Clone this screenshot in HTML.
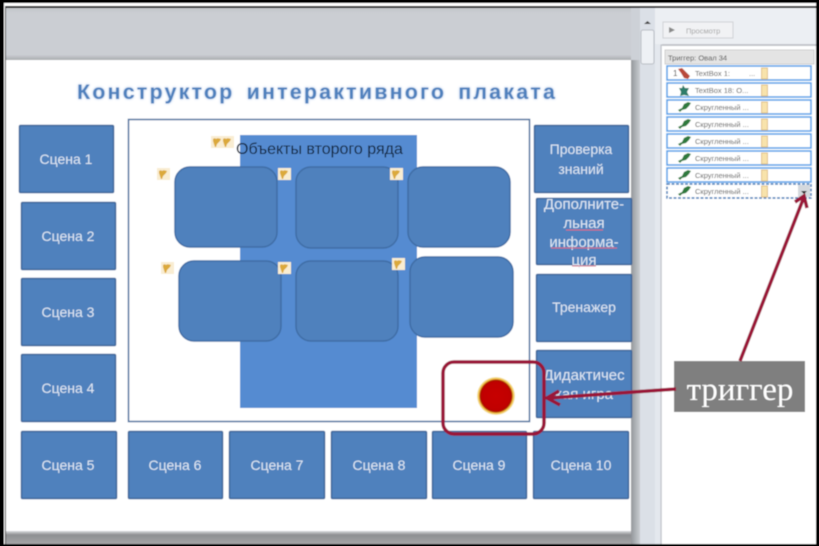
<!DOCTYPE html>
<html><head><meta charset="utf-8"><style>
html,body{margin:0;padding:0;background:#000}
svg{display:block}
text{font-family:"Liberation Sans","DejaVu Sans",sans-serif}
.s{fill:#4f81bd;stroke:#3a659a;stroke-width:1.5}
.t{fill:#dfe8f4;font-size:14px;text-anchor:middle}
.w{font-size:15px}
.r{fill:#4f81bd;stroke:#3f6da5;stroke-width:1.5}
.row{fill:#fff;stroke:#5aa2ea;stroke-width:1.6}
.p{fill:#555;font-size:7.5px}
.ic{fill:#2e7a3c}
.y{fill:#f8e3ac;stroke:#d8b070;stroke-width:.7}
.b{fill:#f9edd2}
.h{fill:#dba93a}
</style></head><body>
<svg width="819" height="546" viewBox="0 0 819 546" xmlns="http://www.w3.org/2000/svg">
<defs>
<linearGradient id="top" x1="0" y1="0" x2="0" y2="1"><stop offset="0" stop-color="#c2c5c9"/><stop offset=".1" stop-color="#cbced3"/><stop offset=".9" stop-color="#cbced3"/><stop offset="1" stop-color="#a9abae"/></linearGradient>
<linearGradient id="bot" x1="0" y1="0" x2="0" y2="1"><stop offset="0" stop-color="#d8d9db"/><stop offset=".3" stop-color="#8e8f91"/><stop offset="1" stop-color="#a5a6a8"/></linearGradient>
<linearGradient id="sh" x1="0" y1="0" x2="1" y2="0"><stop offset="0" stop-color="#94979b"/><stop offset=".35" stop-color="#c6c9ce"/><stop offset="1" stop-color="#cdd1d7"/></linearGradient>
<filter id="all" x="0" y="0" width="100%" height="100%"><feGaussianBlur stdDeviation=".45"/></filter>
<filter id="glow" x="-5%" y="-30%" width="110%" height="160%"><feGaussianBlur stdDeviation="1.4"/></filter>
<radialGradient id="red"><stop offset="0" stop-color="#c70000"/><stop offset=".74" stop-color="#c00000"/><stop offset=".83" stop-color="#a81204"/><stop offset=".9" stop-color="#eec23a"/><stop offset="1" stop-color="#f6e6b8"/></radialGradient>
<g id="heart"><rect x="-7" y="-6" width="13" height="12" class="b"/><path d="M-5-3 q2-1.500 3 0 q1-1.500 5 0 l-1 2 -3 3 -1 3 -1 0 -1-3 -1-3z" class="h"/></g>
<g id="star"><path d="M0 7 l4-2 2-4 4-2 3 1 -2 3 -3 3 -4 1 -2 2z" class="ic"/></g>
</defs>
<g filter="url(#all)">
<rect width="819" height="546" fill="#000"/>
<rect x="4" y="3" width="812" height="541" fill="#fff"/>
<rect x="5" y="6" width="811" height="538" fill="#111"/>
<rect x="6" y="8" width="810" height="536" fill="#cbced3"/>
<rect x="6" y="8" width="649" height="52" fill="url(#top)"/>
<rect x="6" y="531" width="649" height="13" fill="url(#bot)"/>
<rect x="631" y="60" width="24" height="484" fill="url(#sh)"/>
<rect x="631" y="8" width="24" height="52" fill="#cdd1d7"/>
<rect x="6" y="60" width="625" height="471" fill="#fff"/>
<rect x="640" y="8" width="15" height="536" fill="#dbe0e7"/>
<rect x="641" y="30" width="13" height="34" rx="2" fill="#eef1f5" stroke="#b8bcc3"/>
<path d="M644 24h7l-3.500-3z" fill="#444"/>
<rect x="655" y="8" width="7" height="536" fill="#e4e8ee"/>
<rect x="655" y="8" width="161" height="36" fill="#eceff3"/>
<rect x="662" y="46" width="154" height="498" fill="#fff"/>
<path d="M661 544V45H816" fill="none" stroke="#bcbfc4"/>
<rect x="663" y="22" width="70" height="16" fill="#f1f2f4" stroke="#cfd2d6"/>
<path d="M669 27v6l6-3z" fill="#8a8a8a"/>
<text x="686" y="33.500" fill="#a4a4a4" style="font-size:7.500px">Просмотр</text>
<rect x="665" y="50" width="149" height="14" fill="#e4e4e4" stroke="#cfcfcf"/>
<text x="668" y="60.500" fill="#444" style="font-size:7.500px">Триггер: Овал 34</text>
<rect class="row" x="667" y="66" width="144" height="14"/>
<rect class="row" x="667" y="83" width="144" height="14"/>
<rect class="row" x="667" y="100" width="144" height="14"/>
<rect class="row" x="667" y="117" width="144" height="14"/>
<rect class="row" x="667" y="134" width="144" height="14"/>
<rect class="row" x="667" y="151" width="144" height="14"/>
<rect class="row" x="667" y="168" width="144" height="14"/>
<rect x="667" y="184" width="144" height="14" fill="#fff" stroke="#3b78b8" stroke-width="1.500" stroke-dasharray="3 1.500"/>
<text x="673" y="76" fill="#333" style="font-size:8px">1</text>
<path d="M678 69l4-1 8 8-2 3-4-1-3-5z" fill="#b94a3a"/>
<path d="M683 85l2 3 4 0-2 4 2 4-5-1-4 1 1-4-2-4 3 0z" fill="#2f7d6a"/>
<use href="#star" x="678" y="103"/><use href="#star" x="678" y="120"/><use href="#star" x="678" y="137"/><use href="#star" x="678" y="154"/><use href="#star" x="678" y="171"/><use href="#star" x="678" y="187"/>
<text class="p" x="695" y="76">TextBox 1:</text><text class="p" x="749" y="76">...</text>
<text class="p" x="695" y="93">TextBox 18: О...</text>
<text class="p" x="695" y="110">Скругленный ...</text>
<text class="p" x="695" y="127">Скругленный ...</text>
<text class="p" x="695" y="144">Скругленный ...</text>
<text class="p" x="695" y="161">Скругленный ...</text>
<text class="p" x="695" y="178">Скругленный ...</text>
<text class="p" x="695" y="194">Скругленный ...</text>
<rect class="y" x="761.500" y="68" width="6" height="11"/><rect class="y" x="761.500" y="85" width="6" height="11"/><rect class="y" x="761.500" y="102" width="6" height="11"/><rect class="y" x="761.500" y="119" width="6" height="11"/><rect class="y" x="761.500" y="136" width="6" height="11"/><rect class="y" x="761.500" y="153" width="6" height="11"/><rect class="y" x="761.500" y="170" width="6" height="11"/><rect class="y" x="761.500" y="186" width="6" height="11"/>
<rect x="798" y="185" width="12" height="12" fill="#d4d8dd"/>
<path d="M801 191h6l-3 3z" fill="#222"/>

<text x="77" y="99" style="font-size:21.500px;font-weight:bold;letter-spacing:2.150px;word-spacing:4px" fill="#a9c6ec" filter="url(#glow)">Конструктор интерактивного плаката</text>
<text x="77" y="99" style="font-size:21.500px;font-weight:bold;letter-spacing:2.150px;word-spacing:4px" fill="#4f81bd">Конструктор интерактивного плаката</text>

<rect x="128.500" y="119.500" width="401" height="302" fill="#fff" stroke="#4a6f9c" stroke-width="1.500"/>
<rect x="240" y="135" width="177" height="273" fill="#548bd1"/>
<rect class="r" x="175" y="167" width="102" height="80" rx="15"/>
<rect class="r" x="296" y="167" width="102" height="81" rx="15"/>
<rect class="r" x="408" y="167" width="102" height="80" rx="15"/>
<rect class="r" x="179" y="261" width="102" height="80" rx="15"/>
<rect class="r" x="296" y="261" width="102" height="80" rx="15"/>
<rect class="r" x="410" y="257" width="103" height="80" rx="15"/>
<text x="236" y="154" style="font-size:16px" fill="#0c1a30">Объекты второго ряда</text>
<use href="#heart" x="218" y="142"/><use href="#heart" x="228" y="142"/><use href="#heart" x="164" y="174"/><use href="#heart" x="285" y="174"/><use href="#heart" x="397" y="174"/><use href="#heart" x="168" y="268"/><use href="#heart" x="285" y="268"/><use href="#heart" x="399" y="264"/>

<rect class="s" x="19.500" y="125.500" width="94" height="67" rx="1"/>
<rect class="s" x="21.500" y="202.500" width="94" height="67" rx="1"/>
<rect class="s" x="21.500" y="278.500" width="94" height="67" rx="1"/>
<rect class="s" x="21.500" y="354.500" width="94" height="67" rx="1"/>
<rect class="s" x="21.500" y="431.500" width="95" height="67" rx="1"/>
<rect class="s" x="128.500" y="431.500" width="94" height="67" rx="1"/>
<rect class="s" x="229.500" y="431.500" width="95" height="67" rx="1"/>
<rect class="s" x="331.500" y="431.500" width="95" height="67" rx="1"/>
<rect class="s" x="432.500" y="431.500" width="94" height="67" rx="1"/>
<rect class="s" x="533.500" y="431.500" width="95" height="67" rx="1"/>
<rect class="s" x="534.500" y="125.500" width="94" height="67" rx="1"/>
<rect class="s" x="536.500" y="198.500" width="95" height="66" rx="1"/>
<rect class="s" x="536.500" y="274.500" width="95" height="67" rx="1"/>
<rect class="s" x="536.500" y="350.500" width="95" height="67" rx="1"/>
<text class="t" x="66" y="164">Сцена 1</text>
<text class="t" x="68" y="241">Сцена 2</text>
<text class="t" x="68" y="317">Сцена 3</text>
<text class="t" x="68" y="393">Сцена 4</text>
<text class="t" x="68" y="470">Сцена 5</text>
<text class="t" x="175" y="470">Сцена 6</text>
<text class="t" x="277" y="470">Сцена 7</text>
<text class="t" x="379" y="470">Сцена 8</text>
<text class="t" x="479" y="470">Сцена 9</text>
<text class="t" x="581" y="470">Сцена 10</text>
<text class="t" x="581" y="154">Проверка</text>
<text class="t" x="581" y="174">знаний</text>
<text class="t w" x="584" y="209">Дополните-</text>
<text class="t w" x="584" y="228">льная</text>
<text class="t w" x="584" y="247">информа-</text>
<text class="t w" x="584" y="265">ция</text>
<text class="t" x="584" y="312">Тренажер</text>
<text class="t w" x="584" y="380">Дидактичес</text>
<text class="t w" x="584" y="399">кая игра</text>
<path d="M566 230h37M551 248h66M572 266h24" stroke="#d9657b" stroke-width="1" fill="none"/>

<circle cx="496" cy="396" r="19" fill="url(#red)"/>
<rect x="443" y="362" width="101" height="72" rx="11" fill="none" stroke="#9a1437" stroke-width="3.500"/>
<rect x="674" y="361" width="131" height="51" fill="#7f7f7f"/>
<text x="740" y="400" style="font-family:'Liberation Serif','DejaVu Serif',serif;font-size:33px" fill="#fff" text-anchor="middle">триггер</text>
<path d="M676 389L549 398" stroke="#9a1437" stroke-width="3.500" fill="none"/>
<path d="M559 391L547 398L560 405" stroke="#9a1437" stroke-width="3.500" fill="none"/>
<path d="M740 361L804 197" stroke="#9a1437" stroke-width="3.500" fill="none"/>
<path d="M795 202L804 196L807 208" stroke="#9a1437" stroke-width="3.500" fill="none"/>
</g>
</svg>
</body></html>
